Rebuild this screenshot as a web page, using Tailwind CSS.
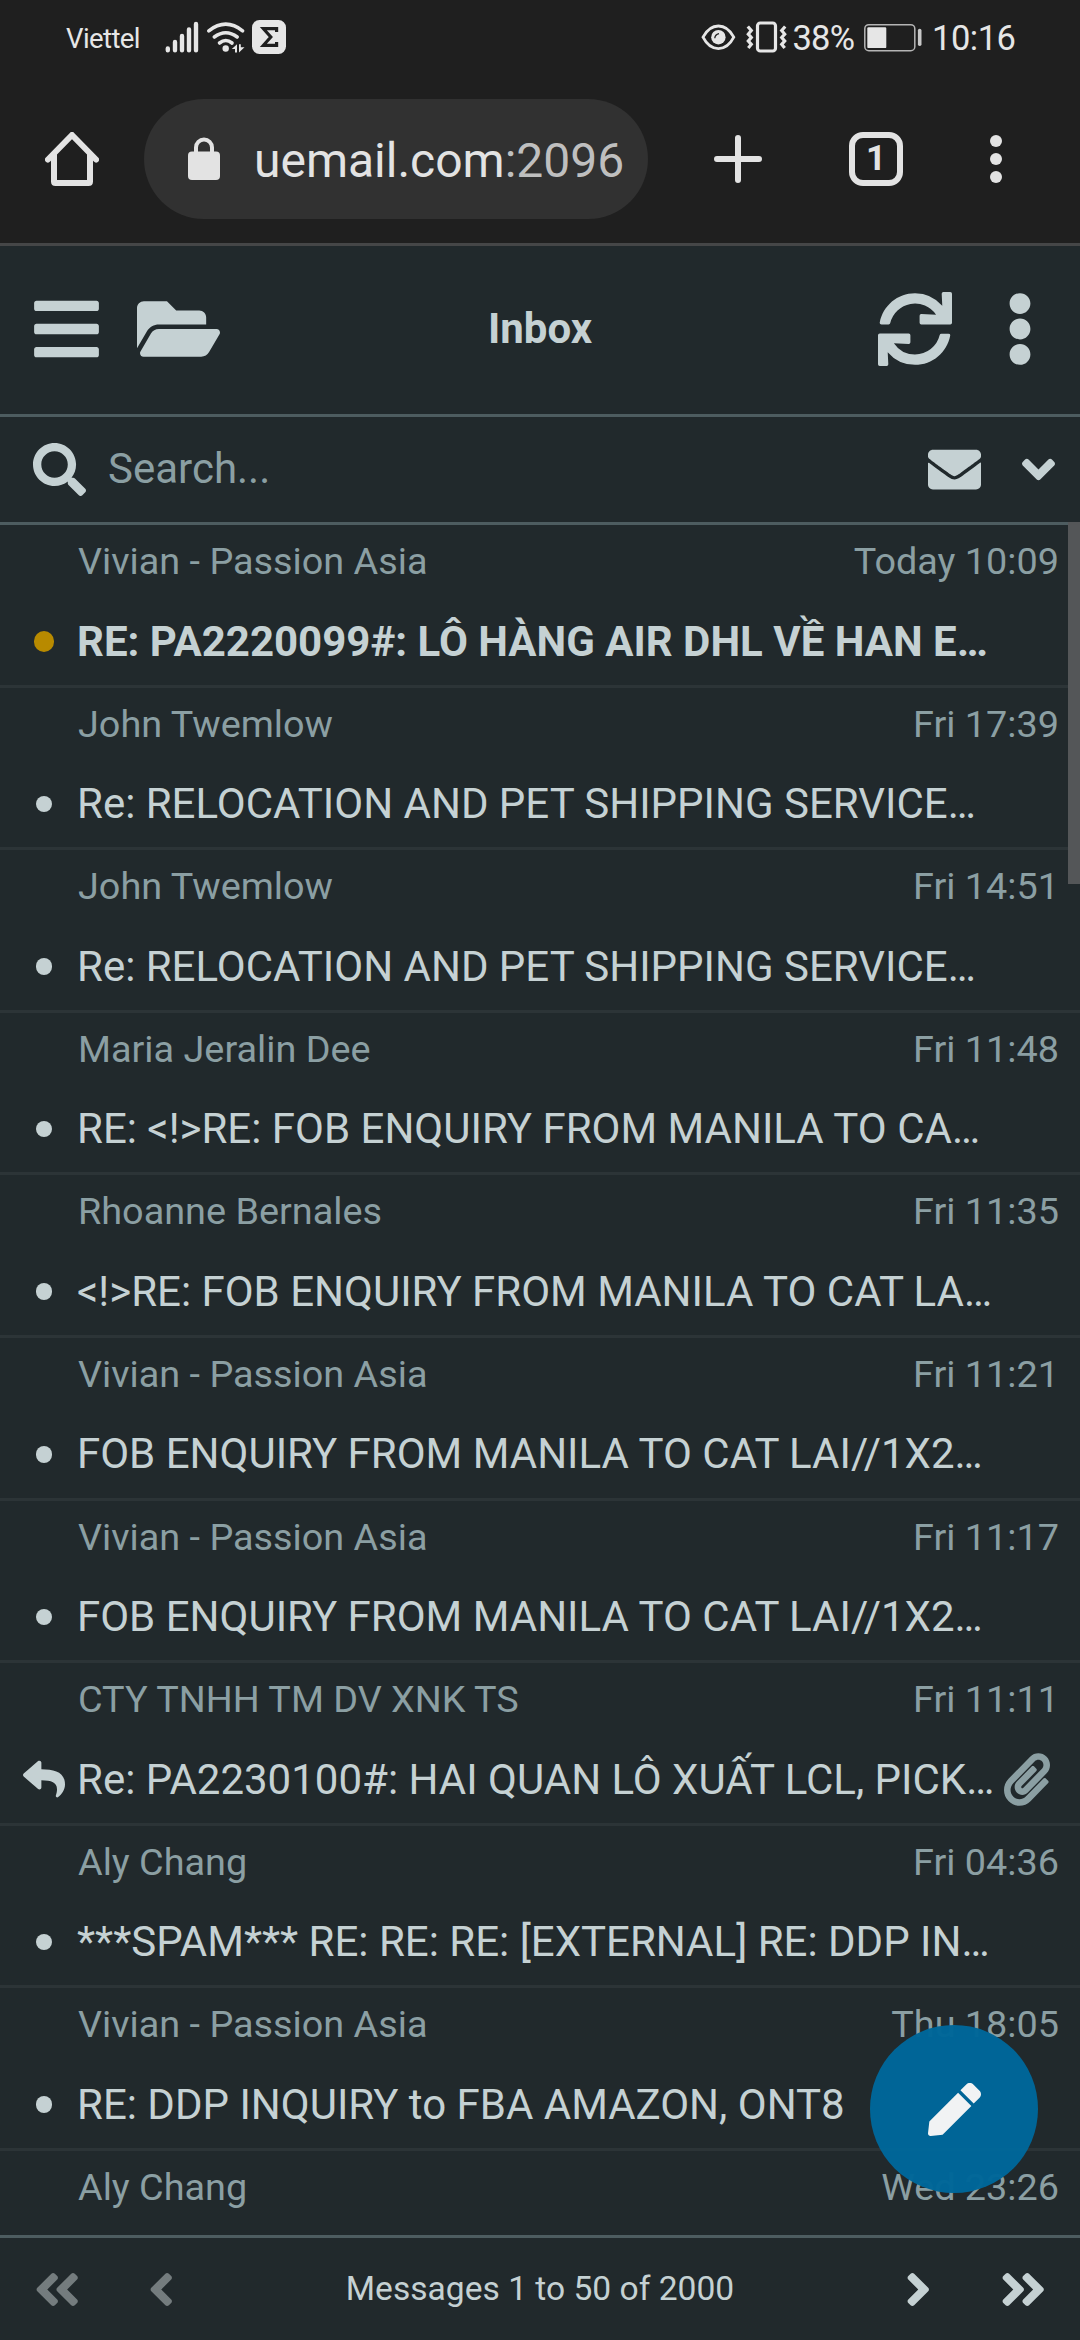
<!DOCTYPE html>
<html lang="en">
<head>
<meta charset="utf-8">
<title>Inbox</title>
<script src="https://cdn.jsdelivr.net/npm/@tailwindcss/browser@4"></script>
</head>
<body class="w-[1080px] h-[2340px] overflow-hidden bg-[#21292c] font-['Roboto',sans-serif] text-[#c5d1d3]">
<svg class="hidden">
  <symbol id="dbl" viewBox="0 0 448 512"><path fill="currentColor" d="M223.7 239l136-136c9.4-9.4 24.6-9.4 33.9 0l22.6 22.6c9.4 9.4 9.4 24.6 0 33.9L319.9 256l96.4 96.4c9.4 9.4 9.4 24.6 0 33.9L393.7 409c-9.4 9.4-24.6 9.4-33.9 0l-136-136c-9.5-9.4-9.5-24.6-.1-34zm-192 34l136 136c9.4 9.4 24.6 9.4 33.9 0l22.6-22.6c9.4-9.4 9.4-24.6 0-33.9L127.9 256l96.4-96.4c9.4-9.4 9.4-24.6 0-33.9L201.7 103c-9.4-9.4-24.6-9.4-33.9 0l-136 136c-9.5 9.4-9.5 24.6-.1 34z"/></symbol>
  <symbol id="sgl" viewBox="0 0 256 512"><path fill="currentColor" d="M31.7 239l136-136c9.4-9.4 24.6-9.4 33.9 0l22.6 22.6c9.4 9.4 9.4 24.6 0 33.9L127.9 256l96.4 96.4c9.4 9.4 9.4 24.6 0 33.9L201.7 409c-9.4 9.4-24.6 9.4-33.9 0l-136-136c-9.5-9.4-9.5-24.6-.1-34z"/></symbol>
</svg>
<div class="relative flex flex-col w-[1080px] h-[2340px]">

  <!-- System status bar and browser toolbar -->
  <div class="h-[246px] shrink-0 bg-[#1f1f1f] border-b-3 border-[#454647] text-[#e6e6e6]">
    <div class="h-[75px] flex items-center">
      <span class="ml-[66px] w-[98px] text-[27.500px] leading-[75px] tracking-[-0.600px] whitespace-nowrap pt-[2px]">Viettel</span>
      <svg class="w-[128px] h-[75px] shrink-0" viewBox="164 0 128 75" fill="none">
        <g stroke="#e6e6e6" stroke-width="4.4" stroke-linecap="round"><path d="M167.8 48.5v1.8M175 42v8.3M182 36v14.3M189 29.5v20.8M196 24v26.3"/></g>
        <g stroke="#e6e6e6" stroke-width="3.6" stroke-linecap="round"><path d="M208.8 30.8Q225.8 17.5 242.6 30.8"/><path d="M214.3 37Q225.8 28.5 237.2 37"/><path d="M219.5 43Q225.8 38 232 43"/></g>
        <circle cx="225.7" cy="48.5" r="3.2" fill="#e6e6e6"/>
        <path fill="#e6e6e6" d="M237 44.3v8.2h-2V49h-3.2zM239 52.5v-8.2h1.8v3H244.5z"/>
        <rect x="252" y="20" width="34" height="34" rx="7.5" fill="#e6e6e6"/>
        <path d="M276.6 32v-3.300H263.4L270.8 37L263.4 45.300H276.6V42" stroke="#1f1f1f" stroke-width="3.200"/>
      </svg>
      <svg class="ml-[408px] w-[90px] h-[75px] shrink-0" viewBox="700 0 90 75" fill="none" stroke="#e6e6e6">
        <path stroke-width="2.8" d="M703 37.2Q709 26 718.4 26T733.8 37.2Q728 48.6 718.4 48.6T703 37.2z"/>
        <circle cx="718.4" cy="37.2" r="7.2" fill="#e6e6e6" stroke="none"/>
        <path stroke="#1f1f1f" stroke-width="1.3" d="M714.8 38.2Q715 34.5 719 33.6"/>
        <rect x="757.5" y="23" width="18" height="28" rx="2.8" stroke-width="3.2"/>
        <path stroke-width="3.2" d="M747.8 26.5l3.5 4-3 3.6 3 3.4-3 3.5 3 3.4-3 3.6M785.2 26.5l-3.5 4 3 3.6-3 3.4 3 3.5-3 3.4 3 3.6"/>
      </svg>
      <span class="ml-[2.500px] w-[71.500px] text-[34.500px] leading-[75px] tracking-[-0.800px] whitespace-nowrap pt-px">38%</span>
      <svg class="w-[60px] h-[75px] shrink-0" viewBox="864 0 60 75" fill="none">
        <rect x="864.8" y="24.7" width="50" height="26" rx="4" stroke="#b5b5b5" stroke-width="1.5"/>
        <rect x="867.3" y="27.3" width="19" height="20.8" rx="1.2" fill="#e6e6e6"/>
        <rect x="917.9" y="28.8" width="3.6" height="17.2" rx="1.7" fill="#c8c8c8"/>
      </svg>
      <span class="ml-[8px] text-[34.500px] leading-[75px] tracking-[-0.500px] whitespace-nowrap pt-px">10:16</span>
    </div>
    <div class="h-[168px] flex items-center">
      <svg class="ml-[45px] w-[54px] h-[54px] shrink-0" viewBox="45 132 54 54" fill="none" stroke="#e3e3e3" stroke-width="6" stroke-linejoin="round" stroke-linecap="round"><path d="M48 159.5L72 135l24 24.500"/><path stroke-linecap="butt" d="M54 153v28.500q0 1.500 1.500 1.500h33q1.500 0 1.500-1.500V153"/></svg>
      <div class="ml-[45px] w-[504px] h-[120px] rounded-full bg-[#313131] flex items-center shrink-0">
        <svg class="ml-[44px] w-[32px] h-[44px] shrink-0" viewBox="188 136 32 44"><rect x="188" y="150.500" width="32" height="28.500" rx="4" fill="#e3e3e3"/><path d="M196 152v-5.500a8 8 0 0 1 16 0v5.500" fill="none" stroke="#e3e3e3" stroke-width="4"/></svg>
        <span class="ml-[34px] pt-[3px] text-[48px] leading-[60px] whitespace-nowrap text-[#e3e3e3]">uemail.com<span class="text-[#bfbfbf]">:2096</span></span>
      </div>
      <svg class="ml-[66px] w-[48px] h-[48px] shrink-0" viewBox="0 0 48 48" stroke="#e3e3e3" stroke-width="6" stroke-linecap="round"><path d="M3 24h42M24 3v42"/></svg>
      <div class="ml-[87px] w-[54px] h-[54px] shrink-0 rounded-[14px] border-6 border-[#e3e3e3] flex items-center justify-center text-[35px] leading-[42px] font-bold text-[#e3e3e3]">1</div>
      <div class="ml-[87px] flex flex-col gap-[6px]"><i class="size-[12px] rounded-full bg-[#e3e3e3]"></i><i class="size-[12px] rounded-full bg-[#e3e3e3]"></i><i class="size-[12px] rounded-full bg-[#e3e3e3]"></i></div>
    </div>
  </div>

  <!-- Mailbox header -->
  <header class="h-[171px] shrink-0 border-b-3 border-[#4d5c60] grid grid-cols-[1fr_auto_1fr] items-center pb-[3px]">
    <div class="flex items-center pl-[34px]">
      <svg class="w-[65px] h-[74px]" viewBox="0 0 448 512" fill="currentColor"><path d="M16 132h416c8.837 0 16-7.163 16-16V76c0-8.837-7.163-16-16-16H16C7.163 60 0 67.163 0 76v40c0 8.837 7.163 16 16 16zm0 160h416c8.837 0 16-7.163 16-16v-40c0-8.837-7.163-16-16-16H16c-8.837 0-16 7.163-16 16v40c0 8.837 7.163 16 16 16zm0 160h416c8.837 0 16-7.163 16-16v-40c0-8.837-7.163-16-16-16H16c-8.837 0-16 7.163-16 16v40c0 8.837 7.163 16 16 16z"/></svg>
      <svg class="ml-[38px] w-[83px] h-[74px]" viewBox="0 0 576 512" fill="currentColor"><path d="M572.694 292.093L500.27 416.248A63.997 63.997 0 0 1 444.989 448H45.025c-18.523 0-30.064-20.093-20.731-36.093l72.424-124.155A64 64 0 0 1 152 256h399.964c18.523 0 30.064 20.093 20.73 36.093zM152 224h328v-48c0-26.51-21.49-48-48-48H272l-64-64H48C21.49 64 0 85.49 0 112v278.046l69.077-118.418C86.214 242.25 117.989 224 152 224z"/></svg>
    </div>
    <h1 class="text-[42px] leading-[60px] font-bold">Inbox</h1>
    <div class="flex items-center justify-end pr-[46px]">
      <svg class="w-[74px] h-[74px]" viewBox="0 0 512 512" fill="currentColor"><path d="M440.65 12.57l4 82.77A247.16 247.16 0 0 0 255.83 8C134.73 8 33.91 94.92 12.29 209.82A12 12 0 0 0 24.09 224h49.05a12 12 0 0 0 11.67-9.26 175.91 175.91 0 0 1 317-56.94l-101.46-4.86a12 12 0 0 0-12.57 12v47.41a12 12 0 0 0 12 12H500a12 12 0 0 0 12-12V12a12 12 0 0 0-12-12h-47.37a12 12 0 0 0-11.98 12.57zM255.83 432a175.61 175.61 0 0 1-146-77.8l101.8 4.87a12 12 0 0 0 12.57-12v-47.4a12 12 0 0 0-12-12H12a12 12 0 0 0-12 12V500a12 12 0 0 0 12 12h47.35a12 12 0 0 0 12-12.6l-4.15-82.57A247.17 247.17 0 0 0 255.83 504c121.11 0 221.93-86.92 243.55-201.82a12 12 0 0 0-11.8-14.18h-49.05a12 12 0 0 0-11.67 9.26A175.86 175.86 0 0 1 255.83 432z"/></svg>
      <svg class="ml-[54px] w-[28px] h-[74px]" viewBox="0 0 192 512" fill="currentColor"><path d="M96 184c39.8 0 72 32.2 72 72s-32.2 72-72 72-72-32.2-72-72 32.2-72 72-72zM24 80c0 39.8 32.2 72 72 72s72-32.2 72-72S135.8 8 96 8 24 40.2 24 80zm0 352c0 39.8 32.2 72 72 72s72-32.2 72-72-32.2-72-72-72-72 32.2-72 72z"/></svg>
    </div>
  </header>

  <!-- Search -->
  <div class="h-[108px] shrink-0 border-b-3 border-[#4d5c60] flex items-center pl-[33px] pr-[25px]">
    <svg class="size-[53px]" viewBox="0 0 512 512" fill="currentColor"><path d="M505 442.700L405.300 343c-4.500-4.500-10.600-7-17-7H372c27.600-35.300 44-79.700 44-128C416 93.100 322.900 0 208 0S0 93.100 0 208s93.100 208 208 208c48.300 0 92.700-16.400 128-44v16.300c0 6.400 2.500 12.500 7 17l99.700 99.700c9.400 9.400 24.600 9.400 33.900 0l28.300-28.300c9.400-9.400 9.400-24.600.1-34zM208 336c-70.700 0-128-57.200-128-128 0-70.700 57.200-128 128-128 70.700 0 128 57.200 128 128 0 70.700-57.200 128-128 128z"/></svg>
    <span class="ml-[22px] pb-[2px] flex-1 text-[42px] leading-[60px] text-[#8b9fa3]">Search...</span>
    <svg class="size-[53px]" viewBox="0 0 512 512" fill="currentColor"><path d="M502.300 190.800c3.900-3.100 9.700-.2 9.700 4.700V400c0 26.500-21.500 48-48 48H48c-26.500 0-48-21.500-48-48V195.600c0-5 5.700-7.800 9.700-4.700 22.400 17.400 52.100 39.500 154.100 113.600 21.100 15.400 56.700 47.800 92.200 47.600 35.700.3 72-32.800 92.300-47.600 102-74.100 131.600-96.300 154-113.700zM256 320c23.200.4 56.600-29.200 73.400-41.400 132.700-96.300 142.800-104.700 173.400-128.700 5.800-4.500 9.200-11.500 9.200-18.900v-19c0-26.500-21.500-48-48-48H48c-26.500 0-48 21.500-48 48v19c0 7.400 3.400 14.300 9.200 18.900 30.600 23.900 40.700 32.400 173.400 128.700 16.800 12.200 50.200 41.800 73.400 41.400z"/></svg>
    <svg class="ml-[41px] w-[33px] h-[53px]" viewBox="0 0 320 512" fill="currentColor"><path d="M143 352.300L7 216.300c-9.400-9.400-9.400-24.600 0-33.900l22.600-22.600c9.400-9.400 24.600-9.400 33.900 0l96.400 96.400 96.400-96.400c9.400-9.400 24.600-9.400 33.900 0l22.600 22.600c9.400 9.400 9.400 24.600 0 33.900l-136 136c-9.200 9.400-24.400 9.400-33.800 0z"/></svg>
  </div>

  <!-- Message list -->
  <main class="flex-1 min-h-0 overflow-hidden whitespace-nowrap text-[42px]">
    <div class="h-[162.600px] border-b-3 border-[#2c3437]">
      <div class="h-[73px] leading-[73px] flex justify-between pl-[78px] pr-[21px] text-[37.800px] text-[#8b9fa3]"><span>Vivian - Passion Asia</span><span>Today 10:09</span></div>
      <div class="h-[86.600px] leading-[86.600px] flex items-center"><span class="w-[77px] shrink-0 flex justify-center pl-[11px]"><i class="size-[20.500px] rounded-full bg-[#b88a00]"></i></span><span class="pt-px font-bold">RE: PA2220099#: LÔ HÀNG AIR DHL VỀ HAN E…</span></div>
    </div>
    <div class="h-[162.600px] border-b-3 border-[#2c3437]">
      <div class="h-[73px] leading-[73px] flex justify-between pl-[78px] pr-[21px] text-[37.800px] text-[#8b9fa3]"><span>John Twemlow</span><span>Fri 17:39</span></div>
      <div class="h-[86.600px] leading-[86.600px] flex items-center"><span class="w-[77px] shrink-0 flex justify-center pl-[11px]"><i class="size-[16.500px] rounded-full bg-[#c5d1d3]"></i></span><span class="pt-px">Re: RELOCATION AND PET SHIPPING SERVICE…</span></div>
    </div>
    <div class="h-[162.600px] border-b-3 border-[#2c3437]">
      <div class="h-[73px] leading-[73px] flex justify-between pl-[78px] pr-[21px] text-[37.800px] text-[#8b9fa3]"><span>John Twemlow</span><span>Fri 14:51</span></div>
      <div class="h-[86.600px] leading-[86.600px] flex items-center"><span class="w-[77px] shrink-0 flex justify-center pl-[11px]"><i class="size-[16.500px] rounded-full bg-[#c5d1d3]"></i></span><span class="pt-px">Re: RELOCATION AND PET SHIPPING SERVICE…</span></div>
    </div>
    <div class="h-[162.600px] border-b-3 border-[#2c3437]">
      <div class="h-[73px] leading-[73px] flex justify-between pl-[78px] pr-[21px] text-[37.800px] text-[#8b9fa3]"><span>Maria Jeralin Dee</span><span>Fri 11:48</span></div>
      <div class="h-[86.600px] leading-[86.600px] flex items-center"><span class="w-[77px] shrink-0 flex justify-center pl-[11px]"><i class="size-[16.500px] rounded-full bg-[#c5d1d3]"></i></span><span class="pt-px">RE: &lt;!&gt;RE: FOB ENQUIRY FROM MANILA TO CA…</span></div>
    </div>
    <div class="h-[162.600px] border-b-3 border-[#2c3437]">
      <div class="h-[73px] leading-[73px] flex justify-between pl-[78px] pr-[21px] text-[37.800px] text-[#8b9fa3]"><span>Rhoanne Bernales</span><span>Fri 11:35</span></div>
      <div class="h-[86.600px] leading-[86.600px] flex items-center"><span class="w-[77px] shrink-0 flex justify-center pl-[11px]"><i class="size-[16.500px] rounded-full bg-[#c5d1d3]"></i></span><span class="pt-px">&lt;!&gt;RE: FOB ENQUIRY FROM MANILA TO CAT LA…</span></div>
    </div>
    <div class="h-[162.600px] border-b-3 border-[#2c3437]">
      <div class="h-[73px] leading-[73px] flex justify-between pl-[78px] pr-[21px] text-[37.800px] text-[#8b9fa3]"><span>Vivian - Passion Asia</span><span>Fri 11:21</span></div>
      <div class="h-[86.600px] leading-[86.600px] flex items-center"><span class="w-[77px] shrink-0 flex justify-center pl-[11px]"><i class="size-[16.500px] rounded-full bg-[#c5d1d3]"></i></span><span class="pt-px">FOB ENQUIRY FROM MANILA TO CAT LAI//1X2…</span></div>
    </div>
    <div class="h-[162.600px] border-b-3 border-[#2c3437]">
      <div class="h-[73px] leading-[73px] flex justify-between pl-[78px] pr-[21px] text-[37.800px] text-[#8b9fa3]"><span>Vivian - Passion Asia</span><span>Fri 11:17</span></div>
      <div class="h-[86.600px] leading-[86.600px] flex items-center"><span class="w-[77px] shrink-0 flex justify-center pl-[11px]"><i class="size-[16.500px] rounded-full bg-[#c5d1d3]"></i></span><span class="pt-px">FOB ENQUIRY FROM MANILA TO CAT LAI//1X2…</span></div>
    </div>
    <div class="h-[162.600px] border-b-3 border-[#2c3437]">
      <div class="h-[73px] leading-[73px] flex justify-between pl-[78px] pr-[21px] text-[37.800px] text-[#8b9fa3]"><span>CTY TNHH TM DV XNK TS</span><span>Fri 11:11</span></div>
      <div class="h-[86.600px] leading-[86.600px] flex items-center"><span class="w-[77px] shrink-0 flex justify-center pl-[11px]"><svg class="size-[42px]" viewBox="0 0 512 512" fill="currentColor"><path d="M8.309 189.836L184.313 37.851C199.719 24.546 224 35.347 224 56.015v80.053c160.629 1.839 288 34.032 288 186.258 0 61.441-39.581 122.309-83.333 154.132-13.653 9.931-33.111-2.533-28.077-18.631 45.344-145.012-21.507-183.510-176.590-185.742V360c0 20.700-24.300 31.453-39.687 18.164l-176.004-152c-11.071-9.562-11.086-26.753 0-36.328z"/></svg></span><span class="flex-1 pt-px">Re: PA2230100#: HAI QUAN LÔ XUẤT LCL, PICK…</span><svg class="mr-[30px] w-[46px] h-[53px]" viewBox="0 0 448 512" fill="#8b9fa3"><path d="M43.246 466.142c-58.430-60.289-57.341-157.511 1.386-217.581L254.392 34c44.316-45.332 116.351-45.336 160.671 0 43.890 44.894 43.943 117.329 0 162.276L232.214 383.128c-29.855 30.537-78.633 30.111-107.982-.998-28.275-29.970-27.368-77.473 1.452-106.953l143.743-146.835c6.182-6.314 16.312-6.422 22.626-.241l22.861 22.379c6.315 6.182 6.422 16.312.241 22.626L171.427 319.927c-4.932 5.045-5.236 13.428-.648 18.292 4.372 4.634 11.245 4.711 15.688.165l182.849-186.851c19.613-20.062 19.613-52.725-.011-72.798-19.189-19.627-49.957-19.637-69.154 0L90.390 293.295c-34.763 35.560-35.299 93.120-1.191 128.313 34.010 35.093 88.985 35.137 123.058.286l172.060-175.999c6.177-6.319 16.307-6.433 22.626-.256l22.877 22.364c6.319 6.177 6.434 16.307.256 22.626l-172.060 175.998c-59.576 60.938-155.943 60.216-214.770-.485z"/></svg></div>
    </div>
    <div class="h-[162.600px] border-b-3 border-[#2c3437]">
      <div class="h-[73px] leading-[73px] flex justify-between pl-[78px] pr-[21px] text-[37.800px] text-[#8b9fa3]"><span>Aly Chang</span><span>Fri 04:36</span></div>
      <div class="h-[86.600px] leading-[86.600px] flex items-center"><span class="w-[77px] shrink-0 flex justify-center pl-[11px]"><i class="size-[16.500px] rounded-full bg-[#c5d1d3]"></i></span><span class="pt-px">***SPAM*** RE: RE: RE: [EXTERNAL] RE: DDP IN…</span></div>
    </div>
    <div class="h-[162.600px] border-b-3 border-[#2c3437]">
      <div class="h-[73px] leading-[73px] flex justify-between pl-[78px] pr-[21px] text-[37.800px] text-[#8b9fa3]"><span>Vivian - Passion Asia</span><span>Thu 18:05</span></div>
      <div class="h-[86.600px] leading-[86.600px] flex items-center"><span class="w-[77px] shrink-0 flex justify-center pl-[11px]"><i class="size-[16.500px] rounded-full bg-[#c5d1d3]"></i></span><span class="pt-px">RE: DDP INQUIRY to FBA AMAZON, ONT8</span></div>
    </div>
    <div class="h-[162.600px]">
      <div class="h-[73px] leading-[73px] flex justify-between pl-[78px] pr-[21px] text-[37.800px] text-[#8b9fa3]"><span>Aly Chang</span><span>Wed 23:26</span></div>
    </div>
  </main>

  <!-- Pager -->
  <footer class="h-[105px] shrink-0 border-t-3 border-[#4d5c60] flex items-center">
    <div class="flex-1 flex items-center pl-[34px] text-[#747c7e]">
      <svg class="w-[46.400px] h-[53px]"><use href="#dbl"/></svg>
      <svg class="ml-[68px] w-[26.500px] h-[53px]"><use href="#sgl"/></svg>
    </div>
    <span class="text-[33.600px] leading-[54px]">Messages 1 to 50 of 2000</span>
    <div class="flex-1 flex items-center justify-end pr-[34px]">
      <svg class="mr-[68px] w-[26.500px] h-[53px] -scale-x-100"><use href="#sgl"/></svg>
      <svg class="w-[46.400px] h-[53px] -scale-x-100"><use href="#dbl"/></svg>
    </div>
  </footer>

  <!-- Scroll thumb -->
  <div class="absolute right-0 top-[522px] w-[12px] h-[362px] bg-[#545658]"></div>

  <!-- Compose button -->
  <div class="absolute left-[870px] top-[2025px] size-[168px] rounded-full bg-[#006799]/98 flex items-center justify-center">
    <svg class="size-[53px]" viewBox="0 0 512 512" fill="#f1f3f4"><path d="M290.740 93.240l128.020 128.020-277.990 277.990-114.140 12.600C11.350 513.540-1.560 500.620.14 485.340l12.700-114.220 277.900-277.880zm207.200-19.060l-60.110-60.110c-18.750-18.750-49.160-18.750-67.910 0l-56.550 56.550 128.020 128.020 56.550-56.550c18.750-18.760 18.750-49.160 0-67.910z"/></svg>
  </div>
</div>
</body>
</html>
